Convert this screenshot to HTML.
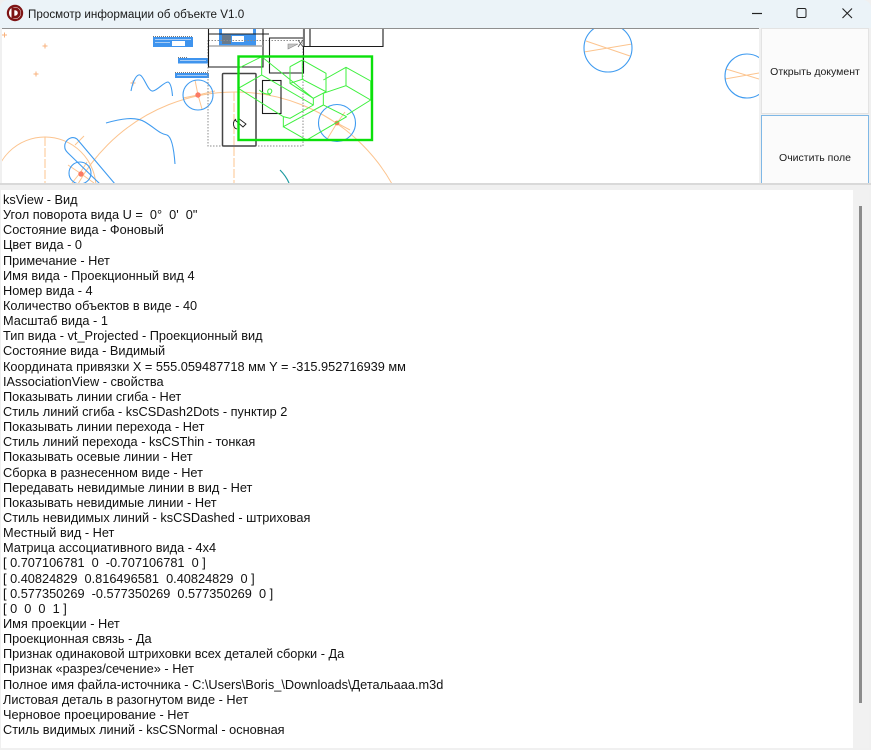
<!DOCTYPE html>
<html lang="ru"><head><meta charset="utf-8"><title>Просмотр информации об объекте V1.0</title>
<style>
html,body{margin:0;padding:0;background:#fff}
#w{position:absolute;left:0;top:0;width:871px;height:750px;overflow:hidden;background:#f0f0f0;font-family:"Liberation Sans",sans-serif;color:#111}
#tb{position:absolute;left:0;top:0;width:871px;height:28px;background:#ebf3f8;border-radius:8px 8px 0 0}
#ttl{position:absolute;left:28px;top:7px;font-size:11.65px;line-height:15px;white-space:nowrap;color:#1a1a1a}
#cv{position:absolute;left:2px;top:28px;width:757px;height:155px;background:#fff;overflow:hidden;border-top:1px solid #8f8f8f;box-sizing:border-box}
#ln{position:absolute;left:0;top:183px;width:871px;height:2px;background:#d9d9d9}
#clip{position:absolute;left:761px;top:28px;width:108px;height:155px;overflow:hidden}
.b{position:absolute;left:0;width:108px;background:#fbfbfb;box-sizing:border-box;font-size:10.5px;text-align:center;display:flex;align-items:center;justify-content:center;color:#1a1a1a;white-space:nowrap}
#b1{top:0;height:86px;border:1px solid #e3e3e3;padding-top:2px}
#b2{top:87px;height:86px;border:1px solid #7fb8e6}
#ta{position:absolute;left:1px;top:190px;width:852px;height:558px;background:#fff}
#tx{position:absolute;left:2px;top:2px;font-size:12.75px;line-height:15.14px;white-space:pre;color:#111}
#sb{position:absolute;left:853px;top:190px;width:16px;height:558px;background:#f1f1f1}
#th{position:absolute;left:6px;top:16px;width:2.5px;height:497px;background:#8c8c8c}
</style></head><body><div id="w">
<div id="tb">
<svg style="position:absolute;left:6px;top:4px" width="18" height="18" viewBox="0 0 18 18"><circle cx="9" cy="9" r="8.200" fill="#7e1414"/><circle cx="9" cy="9" r="6" fill="#fff"/><path d="M5.500 3.500h3.600a5.500 5.500 0 0 1 0 11H5.500z" fill="#7e1414"/><path d="M8.300 6.300h.8a2.700 2.700 0 0 1 0 5.400h-.8z" fill="#fff"/></svg>
<div id="ttl">Просмотр информации об объекте V1.0</div>
<svg style="position:absolute;left:745px;top:0" width="126" height="28" viewBox="0 0 126 28" fill="none" stroke="#222" stroke-width="1"><path d="M7 13.500h10" stroke-width="1.200"/><rect x="52" y="8.500" width="9" height="9" rx="1.500"/><path d="M97.500 8.500l9.500 9.500M107 8.500l-9.500 9.500" stroke-width="1.100"/></svg>
</div>
<div id="cv">
<svg style="position:absolute;left:-2px;top:-29px;filter:blur(.3px)" width="759" height="184" viewBox="0 0 759 184" fill="none">
<g stroke="#fcc48f" stroke-width="1">
<circle cx="235" cy="272" r="180"/>
<circle cx="45" cy="188" r="51"/>
<path d="M45 137V184M234 92V184" stroke-dasharray="9 2"/>
<path d="M2 35h5M4.500 32.500v5M42.500 46h5M45 43.500v5M33.500 74h5M36 71.500v5M130.500 83h5M133 80.500v5" stroke="#f8b27c"/>
<path d="M586 41L630 56M584 52L632 44M726 69L759 79M725 79L759 73"/>
<path d="M198 95L195 80M198 95L215 91M198 95L202 109M198 95L183 98"/>
<path d="M80 173L68 165M80 173L94 183M80 173L72 183M80 173L87 162M75 145L84 136"/>
<path d="M337 123L326 141M337 123L350 130M337 123L345 112"/>
</g>
<g stroke="#3f9bf0" stroke-width="1.100">
<circle cx="608" cy="48" r="24"/>
<circle cx="747" cy="76" r="22"/>
<circle cx="198" cy="95" r="15"/>
<circle cx="80" cy="173" r="11"/>
<circle cx="337" cy="123" r="18.500"/>
<path d="M131 91C133 80 137 74 140 75C144 76 148 92 153 91C158 90 164 82 168 82C171 83 172 90 172.500 96"/>
<path d="M106 123C120 119 135 116 145 122C155 128 160 134 167 135C172 137 174 150 175 164"/>
<path d="M77 139C73 136 67 138 65 144C64 149 66 151 68 153L100 184M77 139L115 184"/>
</g>
<path d="M280 170Q286 176 289 183" stroke="#1d9aa0" stroke-width="1.200"/>
<circle cx="198" cy="95" r="2.700" fill="#fb7a64"/><circle cx="81" cy="174" r="2.700" fill="#fb7a64"/><circle cx="337" cy="123" r="2.400" fill="#f08050"/>
<g fill="#3f94ee">
<rect x="153" y="37" width="40" height="10"/><rect x="178" y="58" width="30" height="5.500"/><rect x="175" y="73" width="34" height="5"/>
<rect x="219" y="28" width="37" height="18"/>
</g>
<g fill="#a9cdf5"><rect x="155" y="39" width="36" height="1"/><rect x="155" y="42" width="15" height="1"/><rect x="180" y="60" width="26" height="1"/><rect x="177" y="75" width="30" height="1"/></g>
<g fill="#fff"><rect x="172" y="41" width="13" height="5"/><rect x="222" y="28" width="31" height="6"/><rect x="232" y="36" width="12" height="6"/></g>
<rect x="222" y="35" width="9" height="9" fill="#6a7a8a"/>
<path d="M153 36.500h40M175 72.500h34M178 57.500h10" stroke="#777" stroke-dasharray="1 1"/>
<path d="M208.500 40.500H303M208 40V146H303V40" stroke="#8c8c8c" stroke-dasharray="1.500 1.500"/>
<g stroke="#1c1c1c" stroke-width="1.100">
<path d="M208.500 28V67H263V28M208.500 34H269"/>
<path d="M269.500 38H303.500V73H269.500Z"/>
<path d="M303.500 28V46M310 28V46.500H383V28M303 46.500H310"/>
<rect x="262.500" y="80.500" width="18.500" height="33"/>
<path d="M236 119C232 122 233 128 237 129M238 118L246 124L243 127L235 120" stroke-width=".9"/>
</g>
<path d="M209 46H263" stroke="#aaa" stroke-width="1.500"/>
<path d="M304 28V46" stroke="#777" stroke-width="2"/>
<path d="M288 44H298L288 49Z" fill="#c4c4c4" stroke="#888" stroke-width=".6"/><path d="M298 40L303 47M303 40L298 47" stroke="#555" stroke-width=".8"/>
<rect x="222.500" y="73.500" width="33.500" height="72.500" rx="1" stroke="#444" stroke-width="1.500"/>
<g transform="translate(200 20) scale(.33333)" stroke="#3ef03e" stroke-width="3">
<path d="M115 145L185 110L340 235M115 205L185 165L340 255M115 205L250 290L270 295L340 255V235M250 290V320L370 255M250 320L320 360L440 290M370 220V255L440 290M370 180L438 142L512 183V240L440 285M370 220L438 197L512 240M438 142V197M270 140L307 120L378 160V215L340 235M270 140V190L340 235M270 190L307 178L378 215M307 120V178M185 110V165"/>
<path d="M178 210C190 222 205 225 212 220C220 212 212 204 206 208C200 214 204 224 212 226" stroke-width="3"/>
</g>
<rect x="238.500" y="56.500" width="133.500" height="83.500" stroke="#0be00b" stroke-width="2.400"/>
</svg>
</div>
<div id="ln"></div>
<div id="clip"><div class="b" id="b1">Открыть документ</div>
<div class="b" id="b2">Очистить поле</div></div>
<div id="ta"><div id="tx">ksView - Вид
Угол поворота вида U =  0°  0'  0"
Состояние вида - Фоновый
Цвет вида - 0
Примечание - Нет
Имя вида - Проекционный вид 4
Номер вида - 4
Количество объектов в виде - 40
Масштаб вида - 1
Тип вида - vt_Projected - Проекционный вид
Состояние вида - Видимый
Координата привязки X = 555.059487718 мм Y = -315.952716939 мм
IAssociationView - свойства
Показывать линии сгиба - Нет
Стиль линий сгиба - ksCSDash2Dots - пунктир 2
Показывать линии перехода - Нет
Стиль линий перехода - ksCSThin - тонкая
Показывать осевые линии - Нет
Сборка в разнесенном виде - Нет
Передавать невидимые линии в вид - Нет
Показывать невидимые линии - Нет
Стиль невидимых линий - ksCSDashed - штриховая
Местный вид - Нет
Матрица ассоциативного вида - 4х4
[ 0.707106781  0  -0.707106781  0 ]
[ 0.40824829  0.816496581  0.40824829  0 ]
[ 0.577350269  -0.577350269  0.577350269  0 ]
[ 0  0  0  1 ]
Имя проекции - Нет
Проекционная связь - Да
Признак одинаковой штриховки всех деталей сборки - Да
Признак «разрез/сечение» - Нет
Полное имя файла-источника - C:\Users\Boris_\Downloads\Детальааа.m3d
Листовая деталь в разогнутом виде - Нет
Черновое проецирование - Нет
Стиль видимых линий - ksCSNormal - основная</div></div>
<div id="sb"><div id="th"></div></div>
</div></body></html>
